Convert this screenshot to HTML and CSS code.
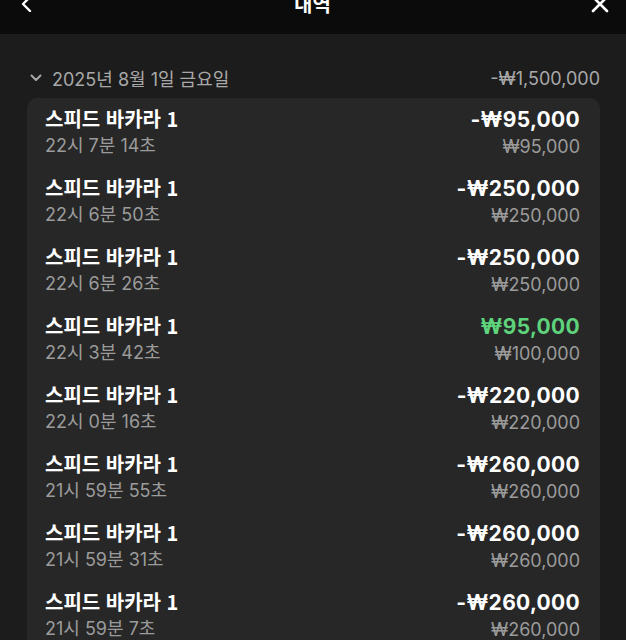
FILE: index.html
```html
<!DOCTYPE html>
<html lang="ko">
<head>
    <meta charset="UTF-8">
    <meta name="viewport" content="width=device-width, initial-scale=1.0">
    <title>내역</title>
    <link rel="stylesheet" href="styles.css">
</head>
<body>
    <header class="topbar">
        <div class="topbar-inner">
            <svg class="icon back" viewBox="0 0 16 16" width="16" height="16">
                <path d="M11 1 L4 8 L11 15" fill="none" stroke="#fff" stroke-width="2.4" stroke-linecap="round" stroke-linejoin="round"/>
            </svg>
            <h1 class="title">내역</h1>
            <svg class="icon close" viewBox="0 0 20 20" width="20" height="20">
                <path d="M3 3 L17 17 M17 3 L3 17" fill="none" stroke="#fff" stroke-width="2.6" stroke-linecap="round"/>
            </svg>
        </div>
    </header>

    <main class="content">
        <div class="day-header">
            <div class="day-label">
                <svg class="chevron" viewBox="0 0 12 8" width="12" height="8">
                    <path d="M1.5 1.5 L6 6 L10.5 1.5" fill="none" stroke="#a8a8a8" stroke-width="2" stroke-linecap="round" stroke-linejoin="round"/>
                </svg>
                <span>2025년 8월 1일 금요일</span>
            </div>
            <span class="day-total">-₩1,500,000</span>
        </div>

        <div class="card">
            <div class="row">
                <div class="row-left"><div class="game">스피드 바카라 1</div><div class="time">22시 7분 14초</div></div>
                <div class="row-right"><div class="amount">-₩95,000</div><div class="bet">₩95,000</div></div>
            </div>
            <div class="row">
                <div class="row-left"><div class="game">스피드 바카라 1</div><div class="time">22시 6분 50초</div></div>
                <div class="row-right"><div class="amount">-₩250,000</div><div class="bet">₩250,000</div></div>
            </div>
            <div class="row">
                <div class="row-left"><div class="game">스피드 바카라 1</div><div class="time">22시 6분 26초</div></div>
                <div class="row-right"><div class="amount">-₩250,000</div><div class="bet">₩250,000</div></div>
            </div>
            <div class="row">
                <div class="row-left"><div class="game">스피드 바카라 1</div><div class="time">22시 3분 42초</div></div>
                <div class="row-right"><div class="amount win">₩95,000</div><div class="bet">₩100,000</div></div>
            </div>
            <div class="row">
                <div class="row-left"><div class="game">스피드 바카라 1</div><div class="time">22시 0분 16초</div></div>
                <div class="row-right"><div class="amount">-₩220,000</div><div class="bet">₩220,000</div></div>
            </div>
            <div class="row">
                <div class="row-left"><div class="game">스피드 바카라 1</div><div class="time">21시 59분 55초</div></div>
                <div class="row-right"><div class="amount">-₩260,000</div><div class="bet">₩260,000</div></div>
            </div>
            <div class="row">
                <div class="row-left"><div class="game">스피드 바카라 1</div><div class="time">21시 59분 31초</div></div>
                <div class="row-right"><div class="amount">-₩260,000</div><div class="bet">₩260,000</div></div>
            </div>
            <div class="row">
                <div class="row-left"><div class="game">스피드 바카라 1</div><div class="time">21시 59분 7초</div></div>
                <div class="row-right"><div class="amount">-₩260,000</div><div class="bet">₩260,000</div></div>
            </div>
        </div>
    </main>
</body>
</html>
```

FILE: styles.css
```css
* {
    box-sizing: border-box;
}
html, body {
    margin: 0;
    padding: 0;
}
body {
    background-color: #1c1c1c;
    color: #fff;
    font-family: Inter, "Noto Sans CJK KR", sans-serif;
    height: 640px;
    overflow: hidden;
}
.topbar {
    height: 34px;
    background-color: #0b0b0b;
    overflow: hidden;
}
.topbar-inner {
    height: 40px;
    margin-top: -16px;
    display: flex;
    align-items: center;
    justify-content: space-between;
    padding: 0 16px 0 19px;
}
.title {
    margin: 0;
    font-family: "Noto Sans CJK KR", sans-serif;
    font-size: 20px;
    font-weight: 700;
    line-height: 40px;
}
.content {
    padding: 31px 26px 0 27px;
}
.day-header {
    display: flex;
    justify-content: space-between;
    align-items: center;
    height: 26px;
    margin-bottom: 7px;
    color: #a8a8a8;
    font-size: 18px;
}
.day-label {
    display: flex;
    align-items: center;
    gap: 10px;
    padding-left: 3px;
}
.card {
    background-color: #272727;
    border-radius: 10px;
    height: 560px;
}
.row {
    display: flex;
    justify-content: space-between;
    padding: 7px 20px 8px 18px;
}
.game {
    font-family: "Noto Sans CJK KR", sans-serif;
    font-size: 20px;
    font-weight: 700;
    line-height: 28px;
}
.amount {
    font-size: 21px;
    font-weight: 700;
    line-height: 30px;
    margin-bottom: -2px;
    letter-spacing: 0.3px;
}
.time {
    font-size: 18px;
    line-height: 26px;
    color: #9b9b9b;
}
.bet {
    font-size: 18px;
    line-height: 26px;
    padding-top: 1px;
    margin-bottom: -1px;
    color: #9b9b9b;
}
.row-right {
    text-align: right;
}
.amount.win {
    color: #5ed37c;
}
```
